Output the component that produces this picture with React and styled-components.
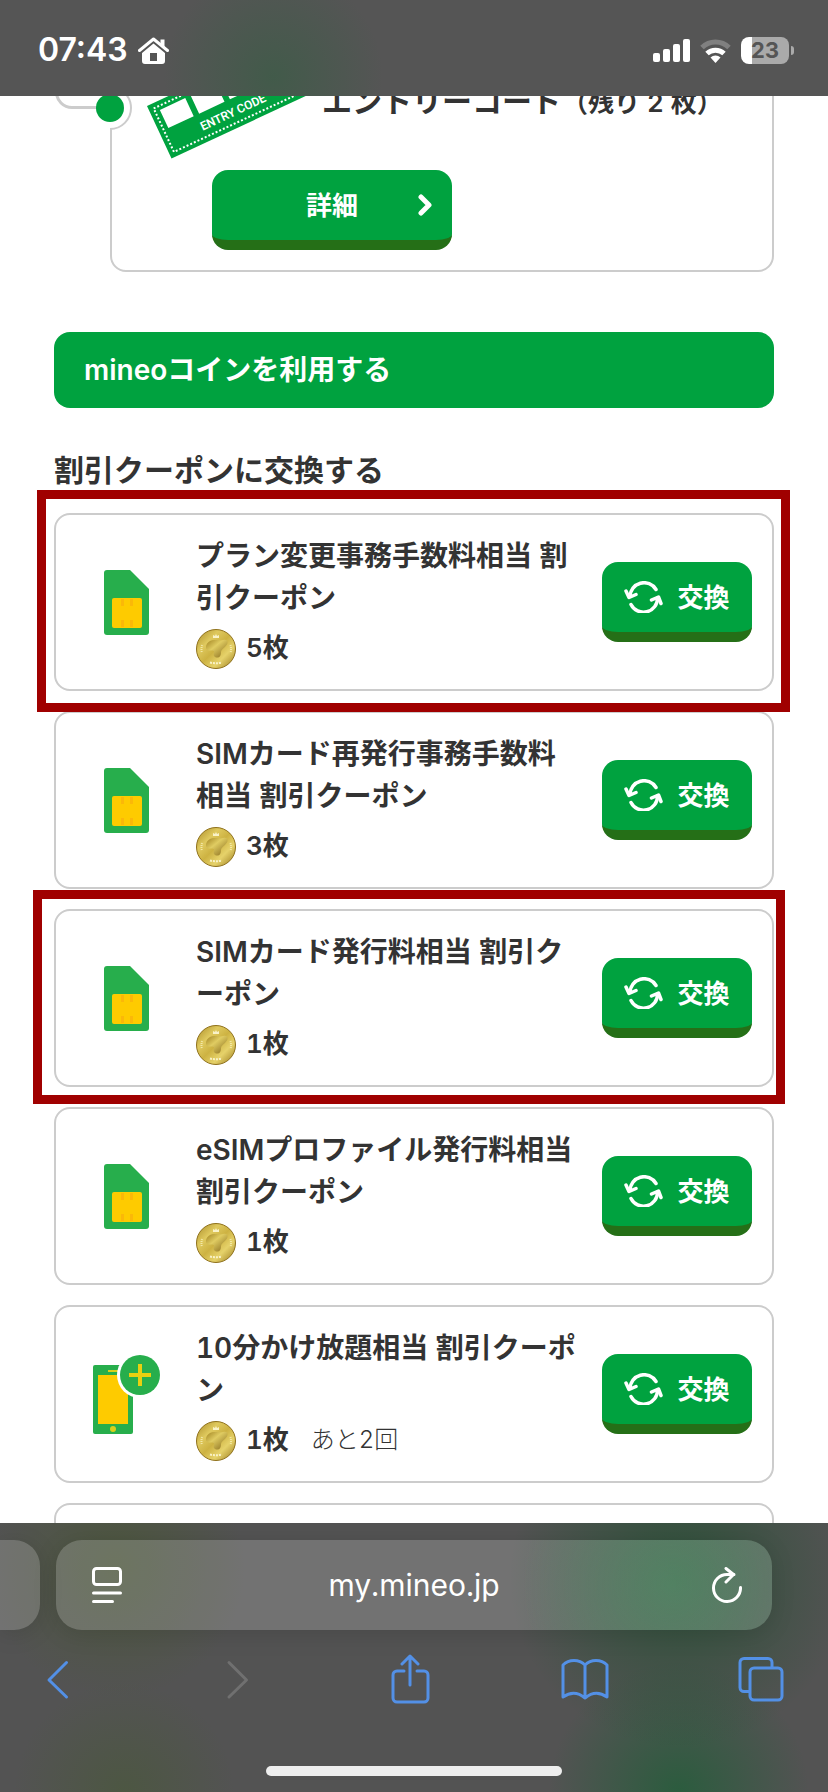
import React from "react";
import styled, { createGlobalStyle } from "styled-components";

const GlobalStyle = createGlobalStyle`
  * {
    box-sizing: border-box;
  }
  body {
    margin: 0;
    background: #fff;
    color: #333;
    font-family: Inter, "Noto Sans CJK JP", sans-serif;
    font-variant-numeric: tabular-nums;
  }
  h2, h3, p, ul {
    margin: 0;
    padding: 0;
  }
  svg {
    display: block;
    flex-shrink: 0;
  }
`;

const Screen = styled.div`
  display: flex;
  flex-direction: column;
  height: 100vh;
`;

const StatusBar = styled.header`
  display: flex;
  flex-shrink: 0;
  justify-content: space-between;
  align-items: center;
  height: 96px;
  padding: 4px 34px 0 38px;
  background:
    radial-gradient(circle at 33% 80%, rgba(50, 95, 65, 0.55), transparent 110px),
    #555;
  color: #fff;
`;

const StatusGroup = styled.div`
  display: flex;
  align-items: center;
  gap: 10px;
`;

const Clock = styled.span`
  font-size: 32px;
  font-weight: 600;
  font-variant-numeric: normal;
  line-height: 40px;
`;

const Battery = styled.div`
  display: flex;
  align-items: center;
  gap: 2px;
  &::after {
    content: "";
    width: 3px;
    height: 9px;
    border-radius: 0 4px 4px 0;
    background: #aaa;
  }
`;

const BatteryLevel = styled.span`
  width: 48px;
  height: 27px;
  border-radius: 8px;
  background: linear-gradient(to right, #fff 11px, #aaa 11px);
  color: #555;
  font-size: 22px;
  font-weight: 700;
  line-height: 27px;
  text-align: center;
`;

const Main = styled.main`
  flex: 1;
  min-height: 0;
  overflow: hidden;
  padding: 0 54px;
`;

/* the page is scrolled, so the top of this card is under the status bar */
const EntryCard = styled.section`
  position: relative;
  margin: -80px 0 60px 56px;
  padding: 24px 20px 20px 30px;
  border: 2px solid #ccc;
  border-radius: 16px;
`;

const Branch = styled.svg`
  position: absolute;
  top: -2px;
  left: -58px;
`;

const EntryRow = styled.div`
  display: flex;
  align-items: center;
`;

const EntryTitle = styled.h3`
  font-size: 30px;
  font-weight: 600;
  line-height: 44px;
  white-space: nowrap;
  small {
    font-size: 26px;
  }
`;

const GreenButton = styled.button`
  display: flex;
  flex-shrink: 0;
  justify-content: center;
  align-items: center;
  width: ${(props) => props.$width};
  height: 80px;
  padding: 0;
  border: 0;
  border-bottom: 10px solid #256f17;
  border-radius: 16px;
  background: #00a23f;
  color: #fff;
  font: inherit;
  font-size: 26px;
  font-weight: 600;
  cursor: pointer;
  span {
    padding-bottom: 4px;
  }
`;

const DetailButton = styled(GreenButton)`
  display: grid;
  grid-template-columns: 1fr auto 1fr;
  margin: 8px 0 0 70px;
  svg {
    justify-self: end;
    margin-right: 20px;
  }
  span {
    grid-column: 2;
  }
`;

const ExchangeButton = styled(GreenButton)`
  gap: 14px;
`;

const SectionTitle = styled.h2`
  padding: 0 30px;
  border-radius: 16px;
  background: #00a23f;
  color: #fff;
  font-size: 28px;
  font-weight: 600;
  line-height: 76px;
`;

const SubTitle = styled.h3`
  margin: 40px 0 21px;
  font-size: 30px;
  font-weight: 600;
  line-height: 44px;
`;

const CouponList = styled.ul`
  display: flex;
  flex-direction: column;
  gap: 20px;
  list-style: none;
`;

const Card = styled.li`
  position: relative;
  display: flex;
  align-items: center;
  min-height: 178px;
  padding: 20px 20px 20px 0;
  border: 2px solid #ccc;
  border-radius: 16px;
`;

/* red frame drawn over the list round a card */
const Frame = styled.span`
  position: absolute;
  z-index: 1;
  inset: ${(props) => props.$inset};
  border: 9px solid #a00000;
  pointer-events: none;
`;

const IconBox = styled.div`
  display: flex;
  flex-shrink: 0;
  justify-content: center;
  width: 140px;
`;

const CouponBody = styled.div`
  flex: 1;
  margin-right: 20px;
`;

const CouponName = styled.p`
  font-size: 28px;
  font-weight: 600;
  line-height: 42px;
  white-space: pre;
`;

const Price = styled.div`
  display: flex;
  align-items: center;
  gap: 10px;
  margin-top: 10px;
  font-size: 26px;
  font-weight: 600;
  line-height: 38px;
  span {
    padding-bottom: 2px;
  }
`;

const Remaining = styled.span`
  margin-left: 12px;
  font-size: 24px;
  font-weight: 300;
`;

const BottomBar = styled.footer`
  display: flex;
  flex-direction: column;
  flex-shrink: 0;
  height: 269px;
  padding-top: 17px;
  overflow: hidden;
  background:
    radial-gradient(circle at 82% 55px, rgba(20, 80, 40, 0.6), transparent 170px),
    radial-gradient(circle at 14% 45px, rgba(70, 90, 40, 0.5), transparent 130px),
    radial-gradient(circle at 82% 100%, rgba(30, 95, 55, 0.75), transparent 130px),
    radial-gradient(circle at 15% 100%, rgba(70, 90, 50, 0.5), transparent 110px),
    #535353;
`;

const AddressRow = styled.div`
  display: flex;
  gap: 16px;
  padding-right: 56px;
`;

const NextTab = styled.div`
  flex-shrink: 0;
  width: 40px;
  border-radius: 0 26px 26px 0;
  background: rgba(255, 255, 255, 0.18);
  box-shadow: 0 4px 24px rgba(0, 0, 0, 0.12);
`;

const AddressBar = styled.div`
  display: flex;
  flex: 1;
  align-items: center;
  min-width: 0;
  height: 90px;
  border-radius: 26px;
  background:
    radial-gradient(circle at 86% 50%, rgba(80, 150, 105, 0.45), transparent 150px),
    rgba(255, 255, 255, 0.18);
  box-shadow: 0 4px 24px rgba(0, 0, 0, 0.12);
`;

const AddressInput = styled.input`
  flex: 1;
  min-width: 0;
  padding: 0;
  border: 0;
  outline: 0;
  background: none;
  color: #fff;
  font: inherit;
  font-size: 30px;
  line-height: 40px;
  text-align: center;
`;

const IconButton = styled.button`
  display: flex;
  justify-content: center;
  width: ${(props) => props.$width};
  padding: 0;
  border: 0;
  background: none;
  color: ${(props) => props.$color};
  cursor: pointer;
`;

const Toolbar = styled.nav`
  display: flex;
  justify-content: space-between;
  margin-top: 24px;
  padding: 0 44px 0 34px;
`;

const HomeIndicator = styled.div`
  width: 296px;
  height: 10px;
  margin: auto auto 16px;
  border-radius: 5px;
  background: #eee;
`;

const HomeIcon = () => (
  <svg width="31" height="27" viewBox="0 0 31 27">
    <path d="M1.5 13.5 15.5 2l14 11.5" fill="none" stroke="#fff" strokeWidth="3" strokeLinecap="round" strokeLinejoin="round" />
    <path d="M22.5 2.5h4v8l-4-3.500z" fill="#fff" />
    <path
      d="M15.500 6.500 27 16v8a3 3 0 0 1-3 3H7a3 3 0 0 1-3-3v-8zM12 16v8h7v-8z"
      fill="#fff"
      fillRule="evenodd"
    />
  </svg>
);

const SignalIcon = () => (
  <svg width="37" height="24" viewBox="0 0 37 24" fill="#fff">
    <rect x="0" y="15" width="7" height="9" rx="2" />
    <rect x="10" y="11" width="7" height="13" rx="2" />
    <rect x="20" y="6" width="7" height="18" rx="2" />
    <rect x="30" y="1" width="7" height="23" rx="2" />
  </svg>
);

const WifiIcon = () => (
  <svg width="31" height="25" viewBox="0 0 31 25" fill="none" strokeWidth="5">
    <path d="M2 9.500a19.500 19.500 0 0 1 27 0" stroke="#808080" />
    <path d="M7 15.500a12.500 12.500 0 0 1 17 0" stroke="#fff" />
    <path d="m15.500 25-5-5.500a7.500 7.500 0 0 1 10 0z" fill="#fff" />
  </svg>
);

const TicketIcon = () => (
  <svg width="180" height="120" viewBox="0 0 180 120">
    <g transform="translate(5 64) rotate(-25)">
      <rect width="178" height="58" fill="#00a23f" />
      <rect x="5" y="5" width="168" height="48" fill="none" stroke="#fff" strokeWidth="2" strokeDasharray="2 2" />
      <path d="M10 9h28v20H10zM44 9h28v20H44zM78 9h28v20H78zM112 9h28v20h-28z" fill="#fff" />
      <text x="40" y="46" fill="#fff" fontFamily="'Liberation Sans Narrow', Roboto, sans-serif" fontSize="12" fontWeight="600">
        ENTRY CODE
      </text>
    </g>
  </svg>
);

const ChevronIcon = () => (
  <svg width="14" height="22" viewBox="0 0 14 22">
    <path d="m3 3 8 8-8 8" fill="none" stroke="#fff" strokeWidth="5" strokeLinecap="round" strokeLinejoin="round" />
  </svg>
);

const ExchangeIcon = () => (
  <svg width="39" height="32" viewBox="0 0 39 32" fill="none" stroke="#fff" strokeWidth="3.500" strokeLinecap="round" strokeLinejoin="round">
    <path d="M6 15.500A14 14 0 0 1 32 8.500" />
    <path d="m2 10 3 6.500 7-3" />
    <path d="M7 23.500A14 14 0 0 0 33.500 17" />
    <path d="m27.500 19 7-3 2.500 6.500" />
  </svg>
);

const SimIcon = () => (
  <svg width="45" height="65" viewBox="0 0 45 65">
    <path d="M3 0h23l19 19v43a3 3 0 0 1-3 3H3a3 3 0 0 1-3-3V3a3 3 0 0 1 3-3z" fill="#27ae4c" />
    <rect x="8" y="28" width="30" height="30" rx="2" fill="#fecb00" />
    <path d="M17 29v7h3v-7zM26 29v7h3v-7zM17 50v7h3v-7zM26 50v7h3v-7z" fill="#fbb808" />
  </svg>
);

const PhoneIcon = () => (
  <svg width="67" height="79" viewBox="0 0 67 79">
    <rect y="10" width="40" height="69" rx="2" fill="#27ae4c" />
    <rect x="5" y="20" width="30" height="49" fill="#fecb00" />
    <path d="M15 16h10" stroke="#d9d01a" strokeWidth="2" />
    <circle cx="20" cy="74" r="3" fill="#d9d01a" />
    <circle cx="47" cy="20" r="23" fill="#fff" />
    <circle cx="47" cy="20" r="20" fill="#27ae4c" />
    <path d="M36 20h22M47 9v22" stroke="#e8d010" strokeWidth="4" />
  </svg>
);

const CoinIcon = () => (
  <svg width="40" height="40" viewBox="0 0 40 40">
    <defs>
      <linearGradient id="coin" x1="0" y1="0" x2="1" y2="1">
        <stop offset="0" stopColor="#a98a26" />
        <stop offset="0.3" stopColor="#dfc95e" />
        <stop offset="0.5" stopColor="#cdb242" />
        <stop offset="0.7" stopColor="#e6d26a" />
        <stop offset="1" stopColor="#96761a" />
      </linearGradient>
      <linearGradient id="coinMark" x1="0" y1="0" x2="1" y2="1">
        <stop offset="0" stopColor="#a08220" />
        <stop offset="0.4" stopColor="#e0cc62" />
        <stop offset="1" stopColor="#836618" />
      </linearGradient>
    </defs>
    <circle cx="20" cy="20" r="19.500" fill="url(#coin)" stroke="#8f711c" />
    <path d="M10 18.500c0-4 3-7 8-7.500 4-.5 6 1 9 0 3-1 5 0 4.500 3-1 4-6 5.500-6.500 9 0 3.500-1 5.500-4 5.500s-4-2.500-3-4.500c1-2-1-2.500-3-2.500-3 0-5-.5-5-3z" fill="url(#coinMark)" />
    <path d="M17 9V6l2 1 1-2 1 2 2-1v3z" fill="#f9f2c8" />
    <path d="M14 33.500q6 1.500 12 0" fill="none" stroke="#f9f2c8" strokeWidth="2" strokeDasharray="2 1" />
    <path d="M6 16q-1 4 0 8M34.500 16q1 4 0 8" fill="none" stroke="#f3e8a8" strokeWidth="2" strokeDasharray="1 1" />
  </svg>
);

const ReaderIcon = () => (
  <svg width="36" height="36" viewBox="0 0 36 36" fill="none" stroke="#fff" strokeWidth="3" strokeLinecap="round">
    <rect x="7.500" y="1.500" width="27" height="16" rx="3" />
    <path d="M7.500 26h27M7.500 34.500h19" />
  </svg>
);

const ReloadIcon = () => (
  <svg width="36" height="36" viewBox="0 0 36 36" fill="none" stroke="#fff" strokeWidth="3" strokeLinecap="round" strokeLinejoin="round">
    <path d="M34.500 20.500a13.500 13.500 0 1 1-13.500-13h7" />
    <path d="m20 1.500 7.500 6-7.500 7.500" />
  </svg>
);

const ToolIcon = ({ children }) => (
  <svg width="48" height="50" viewBox="0 0 48 50" fill="none" stroke="currentColor" strokeWidth="3" strokeLinecap="round" strokeLinejoin="round">
    {children}
  </svg>
);

const coupons = [
  { name: "プラン変更事務手数料相当 割\n引クーポン", coins: 5, frame: "-25px -18px -23px -19px" },
  { name: "SIMカード再発行事務手数料\n相当 割引クーポン", coins: 3 },
  { name: "SIMカード発行料相当 割引ク\nーポン", coins: 1, frame: "-21px -13px -19px -23px" },
  { name: "eSIMプロファイル発行料相当\n割引クーポン", coins: 1 },
  { name: "10分かけ放題相当 割引クーポ\nン", coins: 1, remaining: "あと2回", phone: true },
];

const Coupon = ({ name, coins, remaining, phone, frame }) => (
  <Card>
    <IconBox>{phone ? <PhoneIcon /> : <SimIcon />}</IconBox>
    <CouponBody>
      <CouponName>{name}</CouponName>
      <Price>
        <CoinIcon />
        <span>{coins}枚</span>
        {remaining && <Remaining>{remaining}</Remaining>}
      </Price>
    </CouponBody>
    <ExchangeButton type="button" $width="150px">
      <ExchangeIcon />
      <span>交換</span>
    </ExchangeButton>
    {frame && <Frame $inset={frame} />}
  </Card>
);

const App = () => {
  return (
    <Screen>
      <GlobalStyle />
      <StatusBar>
        <StatusGroup>
          <Clock>07:43</Clock>
          <HomeIcon />
        </StatusGroup>
        <StatusGroup>
          <SignalIcon />
          <WifiIcon />
          <Battery>
            <BatteryLevel>23</BatteryLevel>
          </Battery>
        </StatusGroup>
      </StatusBar>

      <Main>
        <EntryCard>
          <Branch width="80" height="118" viewBox="0 0 80 118" fill="none">
            <circle cx="56" cy="92" r="20" fill="#fff" />
            <path d="M2.500 0v76a15.500 15.500 0 0 0 15.500 15.500h38" stroke="#ccc" strokeWidth="3" />
            <path d="M56 71a21 21 0 0 1 0 42" fill="#fff" stroke="#ccc" strokeWidth="2" />
            <circle cx="56" cy="92" r="14" fill="#00a23f" />
          </Branch>
          <EntryRow>
            <TicketIcon />
            <EntryTitle>
              エントリーコード<small>（残り 2 枚）</small>
            </EntryTitle>
          </EntryRow>
          <DetailButton type="button" $width="240px">
            <span>詳細</span>
            <ChevronIcon />
          </DetailButton>
        </EntryCard>

        <SectionTitle>mineoコインを利用する</SectionTitle>
        <SubTitle>割引クーポンに交換する</SubTitle>
        <CouponList>
          {coupons.map((coupon) => (
            <Coupon key={coupon.name} {...coupon} />
          ))}
          <Card />
        </CouponList>
      </Main>

      <BottomBar>
        <AddressRow>
          <NextTab />
          <AddressBar>
            <IconButton type="button" aria-label="ページメニュー" $width="96px">
              <ReaderIcon />
            </IconButton>
            <AddressInput aria-label="アドレス" defaultValue="my.mineo.jp" />
            <IconButton type="button" aria-label="再読み込み" $width="96px">
              <ReloadIcon />
            </IconButton>
          </AddressBar>
        </AddressRow>
        <Toolbar>
          <IconButton type="button" aria-label="戻る" $width="48px" $color="#5390e6">
            <ToolIcon>
              <path d="M32.500 8.500 15 26l17.500 17" />
            </ToolIcon>
          </IconButton>
          <IconButton type="button" aria-label="進む" $width="48px" $color="#707070">
            <ToolIcon>
              <path d="M19 8.500 36.500 26 19 43" />
            </ToolIcon>
          </IconButton>
          <IconButton type="button" aria-label="共有" $width="48px" $color="#5390e6">
            <ToolIcon>
              <path d="M19 17h-7a4 4 0 0 0-4 4v23a4 4 0 0 0 4 4h27a4 4 0 0 0 4-4V21a4 4 0 0 0-4-4h-7M25 31V3M17 10l8-8 8 8" />
            </ToolIcon>
          </IconButton>
          <IconButton type="button" aria-label="ブックマーク" $width="48px" $color="#5390e6">
            <ToolIcon>
              <path d="M24 11C18 5 8 5 2 11v32c7-5 15-5 22 1 7-6 15-6 22-1V11c-6-6-16-6-22 0zM24 11v33" />
            </ToolIcon>
          </IconButton>
          <IconButton type="button" aria-label="タブ" $width="48px" $color="#5390e6">
            <ToolIcon>
              <path d="M13 37.500H8a4 4 0 0 1-4-4v-25a4 4 0 0 1 4-4h24a4 4 0 0 1 4 4v5" />
              <rect x="14" y="14" width="32" height="32" rx="4" />
            </ToolIcon>
          </IconButton>
        </Toolbar>
        <HomeIndicator />
      </BottomBar>
    </Screen>
  );
};

export default App;
